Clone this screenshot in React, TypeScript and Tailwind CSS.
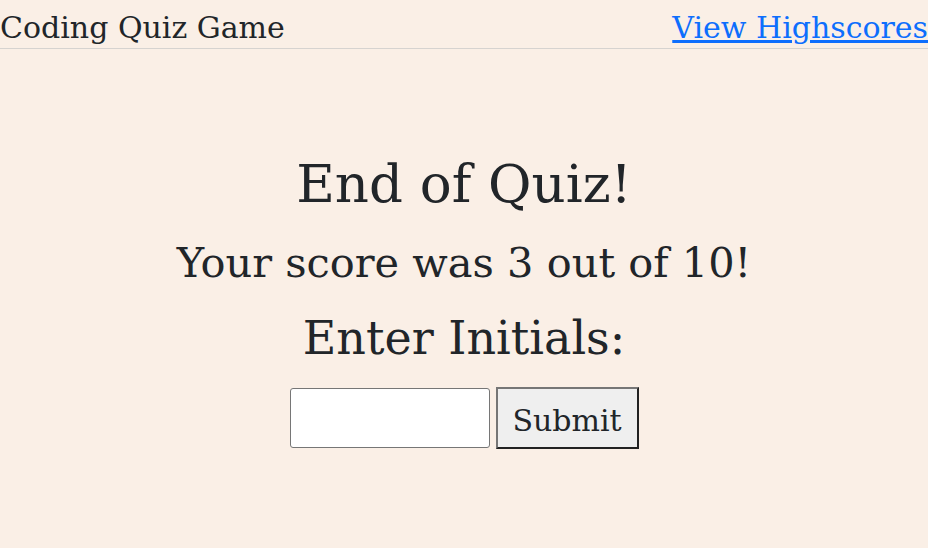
import { useState } from 'react';

export default function App() {
  const [initials, setInitials] = useState('');

  return (
    <div className="min-h-[548px] bg-[#faefe6] text-[#212529] font-['DejaVu_Serif',serif]">
      {/* Top bar */}
      <header className="flex items-start justify-between h-[49px] pt-[13px] border-b border-[#d6d3d0]">
        <span className="text-[30px] leading-none">Coding Quiz Game</span>
        <a href="#" className="text-[30px] leading-none text-[#0d6efd] underline">
          View Highscores
        </a>
      </header>

      {/* End screen */}
      <main className="flex flex-col items-center pt-[102px]">
        <h1 className="text-[53px] leading-[66px]">End of Quiz!</h1>
        <h2 className="text-[41.5px] leading-[60px] mt-[16px]">Your score was 3 out of 10!</h2>
        <h2 className="text-[46px] leading-[60px] mt-[15px]">Enter Initials:</h2>
        <form className="flex items-start gap-[6px] mt-[20px]" onSubmit={(e) => e.preventDefault()}>
          <input
            value={initials}
            onChange={(e) => setInitials(e.target.value)}
            className="w-[200px] h-[60px] bg-white border border-[#767676] rounded-[3px]"
          />
          <button className="w-[143px] h-[62px] -mt-px pt-[6px] bg-[#efefef] border-2 border-t-[#767676] border-l-[#767676] border-r-[#222] border-b-[#222] text-[30px] leading-none">
            Submit
          </button>
        </form>
      </main>
    </div>
  );
}
